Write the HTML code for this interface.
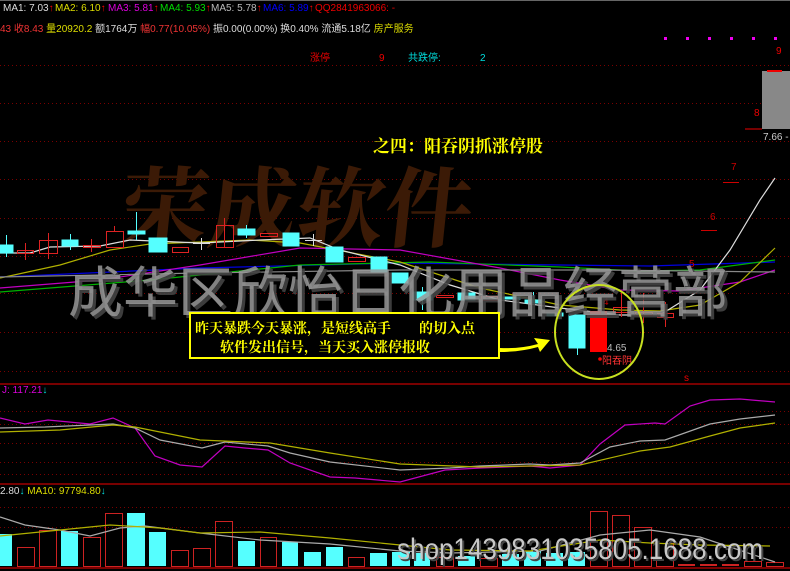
<!DOCTYPE html>
<html><head><meta charset="utf-8"><style>
html,body{margin:0;padding:0;background:#000;width:790px;height:571px;overflow:hidden}
svg{display:block}
.t{font-family:"Liberation Sans","Noto Sans CJK SC",sans-serif;font-size:10px}
.s{font-family:"Liberation Serif","Noto Serif CJK SC",serif;font-weight:bold}
</style></head><body>
<svg width="790" height="571" viewBox="0 0 790 571" xmlns="http://www.w3.org/2000/svg">
<rect width="790" height="571" fill="#000"/>
<line x1="0" y1="0.5" x2="790" y2="0.5" stroke="#666"/>
<g stroke="#7a0000" stroke-dasharray="1,3" stroke-width="1">
<line x1="0" y1="65.5" x2="790" y2="65.5"/><line x1="0" y1="103.5" x2="790" y2="103.5"/>
<line x1="0" y1="141.5" x2="790" y2="141.5"/><line x1="0" y1="179.5" x2="790" y2="179.5"/>
<line x1="0" y1="218.5" x2="790" y2="218.5"/><line x1="0" y1="256.5" x2="790" y2="256.5"/>
<line x1="0" y1="293.5" x2="790" y2="293.5"/><line x1="0" y1="332.5" x2="790" y2="332.5"/>
<line x1="0" y1="371.5" x2="790" y2="371.5"/>
<line x1="0" y1="411.5" x2="790" y2="411.5"/><line x1="0" y1="424.5" x2="790" y2="424.5"/>
<line x1="0" y1="443.5" x2="790" y2="443.5"/><line x1="0" y1="462.5" x2="790" y2="462.5"/>
<line x1="0" y1="474.5" x2="790" y2="474.5"/>
<line x1="0" y1="507.5" x2="790" y2="507.5"/><line x1="0" y1="527.5" x2="790" y2="527.5"/>
</g>
<g stroke="#a00000" stroke-width="1.5">
<line x1="0" y1="384" x2="790" y2="384"/><line x1="0" y1="484" x2="790" y2="484"/><line x1="0" y1="568" x2="790" y2="568"/>
</g>
<text class="t" x="3" y="11" fill="#ddd">MA1: 7.03<tspan fill="#f00">↑</tspan></text>
<text class="t" x="55" y="11" fill="#dd0">MA2: 6.10<tspan fill="#f00">↑</tspan></text>
<text class="t" x="108" y="11" fill="#d0d">MA3: 5.81<tspan fill="#f00">↑</tspan></text>
<text class="t" x="160" y="11" fill="#0d0">MA4: 5.93<tspan fill="#f00">↑</tspan></text>
<text class="t" x="211" y="11" fill="#bbb">MA5: 5.78<tspan fill="#f00">↑</tspan></text>
<text class="t" x="263" y="11" fill="#00f">MA6: 5.89<tspan fill="#f00">↑</tspan></text>
<text class="t" x="315" y="11" fill="#e00">QQ2841963066: -</text>
<text class="t" x="0" y="32" fill="#e33">43 收8.43 <tspan fill="#dd0">量20920.2</tspan> <tspan fill="#ddd">额1764万</tspan> 幅0.77(10.05%) <tspan fill="#ddd">振0.00(0.00%) 换0.40% 流通5.18亿</tspan> <tspan fill="#dd0">房产服务</tspan></text>
<text class="t" x="310" y="61" fill="#e00">涨停</text>
<text class="t" x="379" y="61" fill="#e00">9</text>
<text class="t" x="408" y="61" fill="#0dd">共跌停:</text>
<text class="t" x="480" y="61" fill="#0dd">2</text>
<g fill="#e0e"><rect x="664" y="37" width="3" height="3"/><rect x="686" y="37" width="3" height="3"/><rect x="708" y="37" width="3" height="3"/><rect x="730" y="37" width="3" height="3"/><rect x="752" y="37" width="3" height="3"/><rect x="774" y="37" width="3" height="3"/></g>
<text class="t" x="776" y="54" fill="#e00">9</text>
<rect x="762" y="71" width="30" height="58" fill="#888"/>
<line x1="767" y1="71" x2="782" y2="71" stroke="#e00" stroke-width="2"/>
<line x1="745" y1="129" x2="762" y2="129" stroke="#e00"/>
<text class="t" x="754" y="116" fill="#e00">8</text>
<text class="t" x="763" y="140" fill="#ccc">7.66 - 8</text>
<text class="s" x="118" y="240" fill="#3b1a06" font-size="88" transform="skewX(-6) translate(25,0)">荣成软件</text>
<g fill="none" stroke-width="1.2">
<polyline stroke="#0000e0" points="0,277 200,268 400,263 560,265 650,266 775,262"/>
<polyline stroke="#00b000" points="0,292 150,280 300,265 430,262 560,267 640,271 700,270 775,260"/>
<polyline stroke="#c000c0" points="0,288 100,280 200,265 300,248 400,250 500,268 560,280 620,290 680,291 740,282 775,270"/>
<polyline stroke="#b0b000" points="0,278 60,265 110,250 150,244 250,240 300,243 400,262 480,288 560,305 620,310 660,311 700,305 740,282 775,248"/>
<polyline stroke="#ddd" points="0,253 30,253 50,247 100,246 130,240 200,243 260,240 310,238 340,250 400,265 450,285 500,300 560,308 620,315 660,315 700,290 730,250 760,200 775,178"/>
<polyline stroke="#888" points="0,277 200,273 400,270 600,270 775,272"/>
</g>
<g stroke-width="1">
<g stroke="#5ff" fill="#5ff">
<line x1="6.5" y1="235" x2="6.5" y2="257"/><rect x="0" y="245" width="13" height="8"/>
<line x1="70.5" y1="234" x2="70.5" y2="250"/><rect x="62" y="240" width="16" height="6"/>
<line x1="136.5" y1="212" x2="136.5" y2="240"/><rect x="128" y="231" width="17" height="3"/>
<rect x="149" y="238" width="18" height="14"/>
<line x1="246.5" y1="225" x2="246.5" y2="238"/><rect x="238" y="229" width="17" height="6"/>
<rect x="283" y="233" width="16" height="13"/>
<rect x="326" y="247" width="17" height="15"/>
<rect x="371" y="257" width="16" height="15"/>
<rect x="392" y="273" width="16" height="10"/>
<line x1="422.5" y1="287" x2="422.5" y2="310"/><rect x="413" y="292" width="19" height="8"/>
<rect x="458" y="293" width="17" height="7"/>
<rect x="503" y="297" width="17" height="2"/>
<line x1="533.5" y1="292" x2="533.5" y2="303"/><rect x="525" y="300" width="17" height="3"/>
<rect x="547" y="313" width="16" height="3"/>
<line x1="577.5" y1="345" x2="577.5" y2="355"/><rect x="569" y="315" width="16" height="33"/>
</g>
<g stroke="#d22" fill="none">
<line x1="25.5" y1="243" x2="25.5" y2="260"/><rect x="17.5" y="250.5" width="16" height="3"/>
<line x1="48.5" y1="233" x2="48.5" y2="259"/><rect x="39.5" y="240.5" width="18" height="13"/>
<line x1="91.5" y1="239" x2="91.5" y2="252"/><rect x="83.5" y="245.5" width="17" height="2"/>
<line x1="114.5" y1="226" x2="114.5" y2="231"/><rect x="106.5" y="231.5" width="17" height="16"/>
<rect x="172.5" y="247.5" width="16" height="5"/>
<line x1="224.5" y1="218" x2="224.5" y2="248"/><rect x="216.5" y="225.5" width="17" height="22"/>
<rect x="260.5" y="233.5" width="17" height="3"/>
<rect x="348.5" y="257.5" width="17" height="4"/>
<rect x="436.5" y="295.5" width="17" height="2"/>
<rect x="481.5" y="296.5" width="16" height="4"/>
<line x1="621.5" y1="293" x2="621.5" y2="317"/><rect x="613.5" y="307.5" width="17" height="5"/>
<line x1="643.5" y1="293" x2="643.5" y2="323"/><rect x="635.5" y="312.5" width="17" height="3"/>
<line x1="665.5" y1="302" x2="665.5" y2="327"/><rect x="657.5" y="313.5" width="16" height="4"/>
</g>
<g stroke="#ddd"><line x1="193" y1="243.5" x2="210" y2="243.5"/><line x1="201.5" y1="238" x2="201.5" y2="250"/><line x1="305" y1="240.5" x2="322" y2="240.5"/><line x1="313.5" y1="234" x2="313.5" y2="246"/></g>
<rect x="590" y="311" width="17" height="41" fill="#f00"/>
</g>
<text class="t" x="731" y="170" fill="#c00">7</text><line x1="723" y1="182.5" x2="739" y2="182.5" stroke="#c00"/>
<text class="t" x="710" y="220" fill="#c00">6</text><line x1="701" y1="230.5" x2="717" y2="230.5" stroke="#c00"/>
<text class="t" x="689" y="267" fill="#c00">5</text>
<text class="t" x="603" y="305" fill="#c00">4</text>
<text class="t" x="684" y="381" fill="#e00" font-size="9">s</text>
<text class="t" x="607" y="351" fill="#bbb">4.65</text>
<circle cx="600" cy="359" r="1.8" fill="#f00"/>
<text class="t" x="602" y="364" fill="#f33">阳吞阴</text>
<text x="68" y="312" font-family="'Noto Sans CJK SC',sans-serif" font-size="55" fill="#444" opacity="0.9" transform="translate(3,3)">成华区欣怡日化用品经营部</text>
<text x="68" y="312" font-family="'Noto Sans CJK SC',sans-serif" font-size="55" fill="#999" opacity="0.85">成华区欣怡日化用品经营部</text>
<text class="s" x="373" y="152" fill="#ff0" font-size="17">之四：阳吞阴抓涨停股</text>
<rect x="190" y="313" width="309" height="45" fill="#000" stroke="#ff0" stroke-width="2"/>
<text class="s" x="195" y="333" fill="#ff0" font-size="14">昨天暴跌今天暴涨，是短线高手　　的切入点</text>
<text class="s" x="220" y="352" fill="#ff0" font-size="14">软件发出信号，当天买入涨停报收</text>
<path d="M500,348 Q520,349 538,344 L534,338 L550,340 L540,352 L538,347 Q520,352 500,352 Z" fill="#ff0"/>
<ellipse cx="599" cy="332" rx="44" ry="47" fill="none" stroke="#c8e020" stroke-width="2"/>
<text class="t" x="2" y="393" fill="#d0d">J: 117.21<tspan fill="#0dd">↓</tspan></text>
<g fill="none" stroke-width="1.2">
<polyline stroke="#c000c0" points="0,418 25,424 48,420 90,424 113,418 135,428 155,456 180,465 202,467 225,446 245,448 268,450 290,463 330,477 355,478 400,482 445,470 480,468 530,466 550,468 580,465 600,444 625,425 655,423 665,424 690,406 710,400 740,399 775,402"/>
<polyline stroke="#aaa" points="0,428 45,427 90,425 113,424 135,428 160,440 202,448 225,442 268,446 290,453 330,462 400,470 450,468 480,466 530,464 550,465 580,463 610,447 640,441 665,440 710,424 740,419 775,415"/>
<polyline stroke="#b0b000" points="0,432 60,430 113,425 135,427 200,440 270,443 330,453 400,464 480,467 530,466 580,465 640,451 670,447 710,436 740,428 775,423"/>
</g>
<text class="t" x="0" y="494" fill="#dd0"><tspan fill="#ddd">2.80</tspan><tspan fill="#0dd">↓</tspan> MA10: 97794.80<tspan fill="#0dd">↓</tspan></text>
<g fill="#5ff">
<rect x="0" y="534" width="12" height="32"/><rect x="61" y="531" width="17" height="35"/><rect x="127" y="513" width="18" height="53"/><rect x="149" y="532" width="17" height="34"/><rect x="238" y="541" width="17" height="25"/><rect x="282" y="542" width="16" height="24"/><rect x="304" y="552" width="17" height="14"/><rect x="326" y="547" width="17" height="19"/><rect x="370" y="553" width="17" height="13"/><rect x="392" y="552" width="18" height="14"/><rect x="414" y="553" width="16" height="13"/><rect x="458" y="556" width="17" height="10"/><rect x="502" y="554" width="17" height="12"/><rect x="524" y="551" width="17" height="15"/><rect x="546" y="553" width="17" height="13"/><rect x="568" y="552" width="17" height="14"/>
</g>
<g fill="none" stroke="#c22">
<rect x="17.5" y="547.5" width="17" height="19"/><rect x="39.5" y="530.5" width="17" height="36"/><rect x="83.5" y="537.5" width="17" height="29"/><rect x="105.5" y="513.5" width="17" height="53"/><rect x="171.5" y="550.5" width="17" height="16"/><rect x="193.5" y="548.5" width="17" height="18"/><rect x="215.5" y="521.5" width="17" height="45"/><rect x="260.5" y="537.5" width="16" height="29"/><rect x="348.5" y="557.5" width="16" height="9"/><rect x="436.5" y="557.5" width="17" height="9"/><rect x="480.5" y="558.5" width="17" height="8"/><rect x="590.5" y="511.5" width="17" height="55"/><rect x="612.5" y="515.5" width="17" height="51"/><rect x="634.5" y="527.5" width="17" height="39"/><rect x="656.5" y="543.5" width="17" height="23"/><rect x="744.5" y="561.5" width="17" height="5"/><rect x="766.5" y="562.5" width="17" height="4"/>
</g>
<g stroke="#c22" stroke-width="2"><line x1="678" y1="565" x2="695" y2="565"/><line x1="700" y1="565" x2="717" y2="565"/><line x1="722" y1="565" x2="739" y2="565"/></g>
<g fill="none" stroke-width="1.2">
<polyline stroke="#aaa" points="0,517 25,525 60,530 90,536 120,528 145,526 200,533 260,540 330,544 400,551 450,553 540,551 600,535 650,530 700,537 730,547 775,562"/>
<polyline stroke="#b0b000" points="0,536 50,531 110,525 160,528 200,533 260,532 330,538 400,545 450,550 530,551 600,540 650,543 700,545 770,546"/>
</g>
<text x="399" y="561" font-family="'Liberation Sans',sans-serif" font-size="30" fill="#444" textLength="366" lengthAdjust="spacingAndGlyphs">shop1439831035805.1688.com</text>
<text x="397" y="559" font-family="'Liberation Sans',sans-serif" font-size="30" fill="#c8c8c8" textLength="366" lengthAdjust="spacingAndGlyphs">shop1439831035805.1688.com</text>
</svg>
</body></html>
